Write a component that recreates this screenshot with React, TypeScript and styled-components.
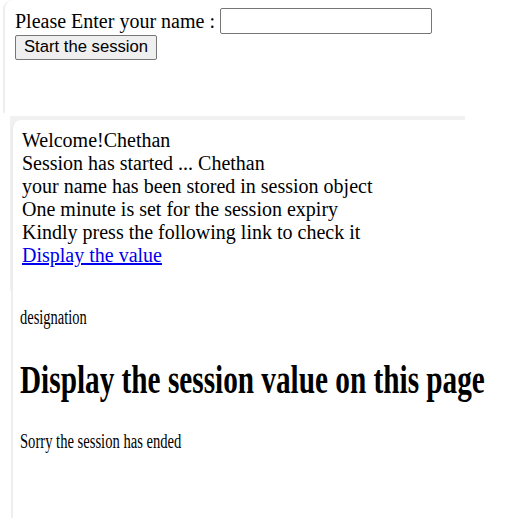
import React from "react";
import styled, { createGlobalStyle } from "styled-components";

const Global = createGlobalStyle`
  html, body { margin: 0; padding: 0; background: #fff; }
  body { font-family: "Liberation Serif", "Times New Roman", serif; font-size: 20px; color: #000; }
`;

const Page = styled.div`
  display: flex;
  flex-direction: column;
  width: 526px;
  height: 518px;
  overflow: hidden;
`;

const FormPanel = styled.section`
  margin-left: 3px;
  height: 113px;
  border-left: 2px solid #eeeeee;
  border-top-left-radius: 9px;
  padding: 8px 0 0 10px;
  box-sizing: border-box;
  display: flex;
  flex-direction: column;
  align-items: flex-start;
`;

const NameRow = styled.label`
  display: flex;
  align-items: center;
  gap: 5px;
  line-height: 23px;
`;

const NameInput = styled.input`
  width: 212px;
  height: 26px;
  box-sizing: border-box;
  border: 1px solid #767676;
  border-radius: 2px;
  padding: 1px 2px;
  font-size: 16px;
`;

const StartButton = styled.button`
  margin-top: 1px;
  width: 142px;
  height: 25px;
  box-sizing: border-box;
  font-family: "Liberation Sans", Arial, sans-serif;
  font-size: 16.67px;
  white-space: nowrap;
  color: #000;
  background: #efefef;
  border: 1px solid #767676;
  border-radius: 2px;
  padding: 0;
  line-height: 1;
`;

const Band = styled.div`
  margin-top: 3px;
  margin-left: 10px;
  width: 455px;
  background: #f1f1f1;
  padding-top: 4px;
`;

const SessionCard = styled.section`
  background: #fff;
  margin-left: 1px;
  border-left: 2px solid #ececec;
  border-top-left-radius: 9px;
  padding: 9px 0 0 9px;
  height: 171px;
  box-sizing: border-box;
  line-height: 23px;
`;

const Line = styled.div`
  white-space: nowrap;
`;

const ValueLink = styled.a`
  color: #0000ee;
  text-decoration: underline;
`;

const ResultPanel = styled.section`
  flex: 1;
  margin-left: 11px;
  border-left: 2px solid #eeeeee;
  padding: 15px 0 0 7px;
`;

const Squeezed = styled.div<{ $scale: number }>`
  transform: scaleX(${(p) => p.$scale});
  transform-origin: left top;
  width: max-content;
`;

const Small = styled.p`
  margin: 0;
  font-size: 20px;
  line-height: 23px;
  white-space: nowrap;
`;

const Heading = styled.h1`
  margin: 28px 0 0 0;
  font-size: 39px;
  line-height: 45px;
  font-weight: bold;
  white-space: nowrap;
`;

const Ended = styled.p`
  margin: 28px 0 0 0;
  font-size: 20px;
  line-height: 23px;
  white-space: nowrap;
`;

export default function App() {
  return (
    <Page>
      <Global />
      <FormPanel>
        <NameRow>
          Please Enter your name :
          <NameInput type="text" />
        </NameRow>
        <StartButton type="button">Start the session</StartButton>
      </FormPanel>
      <Band>
        <SessionCard>
          <Line>Welcome!Chethan</Line>
          <Line>Session has started ... Chethan</Line>
          <Line>your name has been stored in session object</Line>
          <Line>One minute is set for the session expiry</Line>
          <Line>Kindly press the following link to check it</Line>
          <Line>
            <ValueLink href="#">Display the value</ValueLink>
          </Line>
        </SessionCard>
      </Band>
      <ResultPanel>
        <Squeezed $scale={0.725}>
          <Small>designation</Small>
        </Squeezed>
        <Squeezed $scale={0.75}>
          <Heading>Display the session value on this page</Heading>
        </Squeezed>
        <Squeezed $scale={0.73}>
          <Ended>Sorry the session has ended</Ended>
        </Squeezed>
      </ResultPanel>
    </Page>
  );
}
